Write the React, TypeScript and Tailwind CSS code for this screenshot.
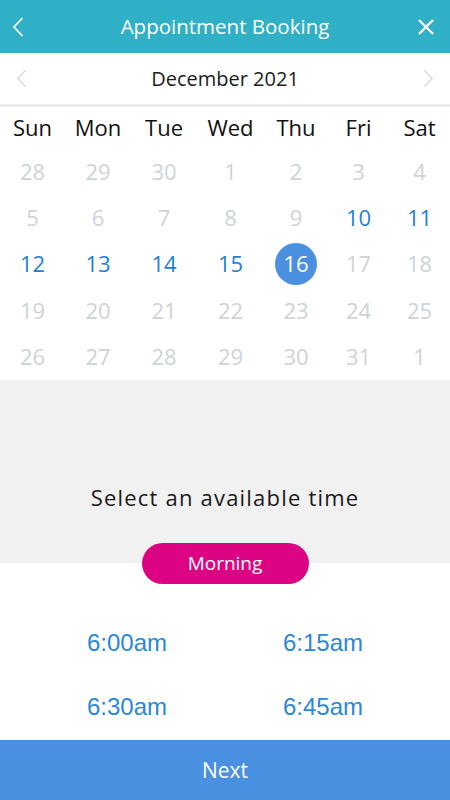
type Day = { n: number; state: "off" | "on" | "sel" }

const weekdays = ["Sun", "Mon", "Tue", "Wed", "Thu", "Fri", "Sat"]

const off = (n: number): Day => ({ n, state: "off" })
const on = (n: number): Day => ({ n, state: "on" })

const weeks: Day[][] = [
  [off(28), off(29), off(30), off(1), off(2), off(3), off(4)],
  [off(5), off(6), off(7), off(8), off(9), on(10), on(11)],
  [on(12), on(13), on(14), on(15), { n: 16, state: "sel" }, off(17), off(18)],
  [off(19), off(20), off(21), off(22), off(23), off(24), off(25)],
  [off(26), off(27), off(28), off(29), off(30), off(31), off(1)],
]

const times = ["6:00am", "6:15am", "6:30am", "6:45am"]

const cols = "grid grid-cols-[65px_66px_66px_67px_64px_61px_61px]"

function Chevron({ dir, className, width = 2 }: { dir: "left" | "right"; className?: string; width?: number }) {
  return (
    <svg viewBox="0 0 12 20" className={className} fill="none" stroke="currentColor" strokeWidth={width}>
      {dir === "left" ? <path d="M10.5 1 L2 10 L10.5 19" /> : <path d="M1.5 1 L10 10 L1.5 19" />}
    </svg>
  )
}

export default function App() {
  return (
    <div className="w-[450px] h-[800px] flex flex-col bg-white font-['Open_Sans',sans-serif] overflow-hidden">
      {/* top bar */}
      <div className="h-[53px] bg-[#2fb0c6] grid grid-cols-[1fr_auto_1fr] items-center pl-[12px] pr-[16px] text-white">
        <Chevron dir="left" className="w-[12px] h-[20px]" width={1.8} />
        <h1 className="text-[20.5px] translate-x-[2px]">Appointment Booking</h1>
        <svg viewBox="0 0 16 16" className="w-[16px] h-[16px] justify-self-end" fill="none" stroke="currentColor" strokeWidth={2.3}>
          <path d="M1 1 L15 15 M15 1 L1 15" />
        </svg>
      </div>

      {/* month switcher */}
      <div className="h-[54px] flex items-center justify-between px-[16px] border-b-[3px] border-[#e9ecef]">
        <Chevron dir="left" className="w-[11px] h-[19px] text-[#d5dadd]" width={1.4} />
        <span className="text-[20px] text-[#1c1c1c]">December 2021</span>
        <Chevron dir="right" className="w-[11px] h-[19px] text-[#d5dadd]" width={1.4} />
      </div>

      {/* calendar */}
      <div className={`${cols} h-[41px] items-center text-center text-[22px] text-[#111]`}>
        {weekdays.map((d) => (
          <span key={d}>{d}</span>
        ))}
      </div>
      <div className={`${cols} auto-rows-[46.4px] items-center text-center text-[22px]`}>
        {weeks.flat().map((d, i) =>
          d.state === "sel" ? (
            <span key={i} className="flex justify-center">
              <span className="w-[42px] h-[42px] rounded-full bg-[#4a8fe0] text-white flex items-center justify-center">
                {d.n}
              </span>
            </span>
          ) : (
            <span key={i} className={d.state === "on" ? "text-[#1f7fd8]" : "text-[#cdd4d8]"}>
              {d.n}
            </span>
          )
        )}
      </div>

      {/* time picker header */}
      <div className="bg-[#f1f1f1] h-[183px] flex flex-col items-center justify-end">
        <p className="text-[22px] tracking-[1.2px] text-[#1a1a1a] leading-[28px] mb-[32px]">Select an available time</p>
        <button className="relative z-10 -mb-[21px] w-[167px] h-[41px] rounded-full bg-[#dc0482] text-white text-[19px]">
          Morning
        </button>
      </div>

      {/* slots */}
      <div className="flex-1 pt-[48px] px-[29px]">
        <div className="grid grid-cols-2 auto-rows-[64px] items-center text-center">
          {times.map((t) => (
            <span key={t} className="font-['Liberation_Sans',Arial,sans-serif] text-[24px] text-[#2b87d9]">
              {t}
            </span>
          ))}
        </div>
      </div>

      <button className="h-[60px] bg-[#4a90e0] text-white text-[21px] pt-[2px]">Next</button>
    </div>
  )
}
